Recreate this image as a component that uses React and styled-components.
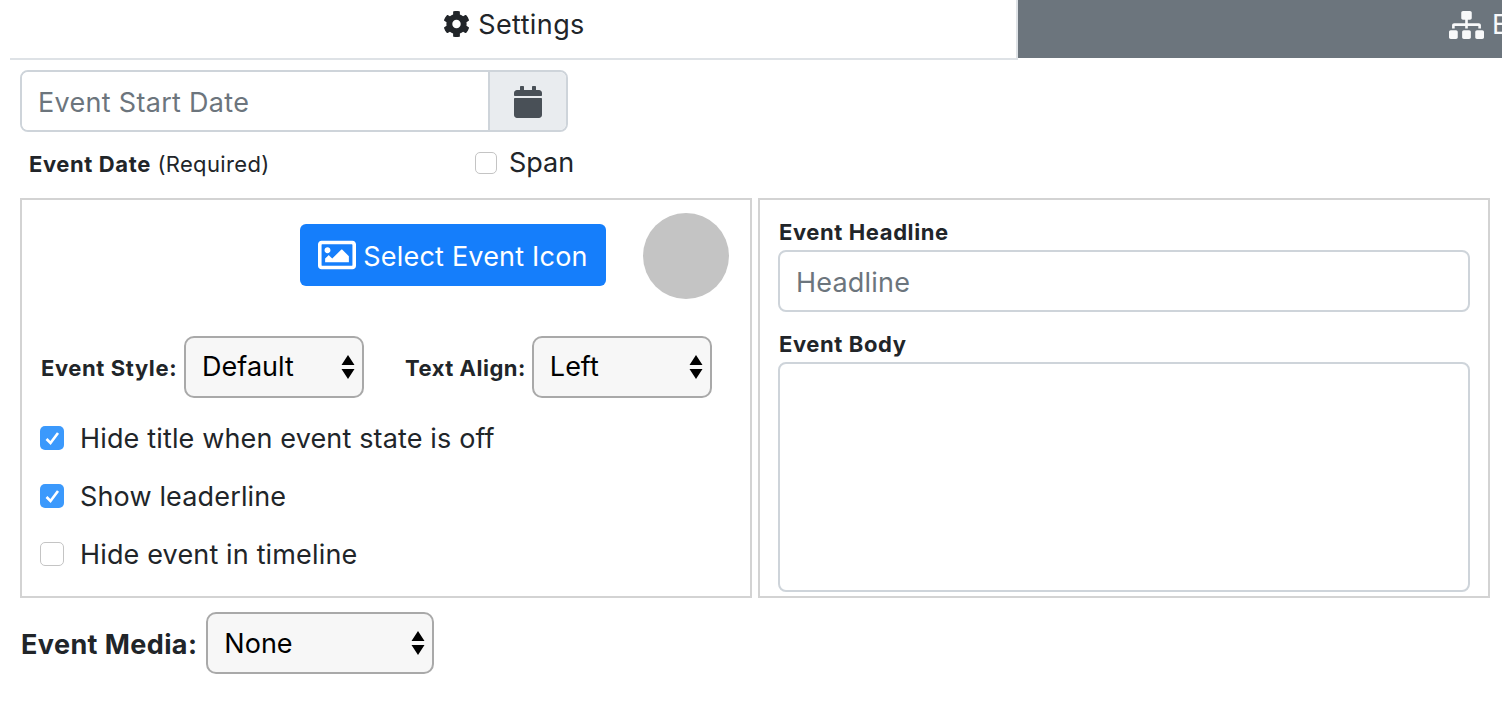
import styled, { createGlobalStyle } from "styled-components";
import { FaCog, FaSitemap, FaCalendar, FaRegImage } from "react-icons/fa";

const GlobalStyle = createGlobalStyle`
  html, body {
    margin: 0;
    background: #fff;
    overflow: hidden;
  }
  body {
    font-family: Inter, "Liberation Sans", sans-serif;
    color: #212529;
  }
  * {
    box-sizing: border-box;
  }
`;

const Page = styled.div`
  width: 1502px;
  height: 716px;
  padding-left: 10px;
  overflow: hidden;
`;

const Tabs = styled.div`
  display: flex;
  height: 60px;
`;

const Tab = styled.div`
  height: ${(p) => (p.$active ? "60px" : "58px")};
  display: flex;
  align-items: center;
  gap: 8px;
  font-size: 27px;
  letter-spacing: 0.4px;
  white-space: nowrap;
  overflow: hidden;
  svg {
    flex: none;
    height: 28px;
    width: ${(p) => (p.$active ? "27px" : "35px")};
  }
  ${(p) =>
    p.$active
      ? `
    width: 1008px;
    justify-content: center;
    padding-bottom: 10px;
    padding-left: 2px;
    color: #212529;
    border-bottom: 2px solid #dee2e6;
    border-right: 2px solid #dee2e6;
  `
      : `
    flex: 1;
    padding-left: 431px;
    padding-bottom: 9px;
    background: #6c757d;
    color: #f8f9fa;
  `}
`;

const Content = styled.div`
  padding: 10px 12px 0 10px;
`;

const InputGroup = styled.div`
  display: flex;
  width: 548px;
  height: 62px;
  border: 2px solid #ced4da;
  border-radius: 8px;
  overflow: hidden;
`;

const GroupInput = styled.input`
  flex: 1;
  min-width: 0;
  border: 0;
  outline: 0;
  padding: 2px 16px 0;
  font: 27px Inter, "Liberation Sans", sans-serif;
  letter-spacing: 0.3px;
  background: #fff;
  &::placeholder {
    color: #6c757d;
    opacity: 1;
  }
`;

const Addon = styled.div`
  width: 78px;
  display: flex;
  align-items: center;
  justify-content: center;
  padding-top: 2px;
  background: #e9ecef;
  border-left: 2px solid #ced4da;
  color: #495057;
  font-size: 32px;
`;

const DateRow = styled.div`
  display: flex;
  align-items: center;
  height: 66px;
  padding-left: 9px;
`;

const DateLabel = styled.div`
  width: 446px;
  margin-top: -2px;
  font-size: 22px;
  letter-spacing: 0.35px;
`;

const Bold = styled.strong`
  font-weight: 700;
  letter-spacing: 0.6px;
`;

const Check = styled.input.attrs({ type: "checkbox", readOnly: true })`
  appearance: none;
  width: 24px;
  height: 24px;
  margin: 0;
  flex: none;
  border: 1px solid #c4c4c4;
  border-radius: 5px;
  background: #fff;
  &:checked {
    border: 0;
    background: #3b99fc
      url("data:image/svg+xml,%3Csvg xmlns='http://www.w3.org/2000/svg' viewBox='0 0 24 24'%3E%3Cpath d='M6.5 13l4 4L18 7' fill='none' stroke='white' stroke-width='2.6'/%3E%3C/svg%3E")
      center / 24px 24px no-repeat;
  }
`;

const SpanCheck = styled(Check)`
  width: 22px;
  height: 22px;
`;

const SpanField = styled.label`
  display: flex;
  align-items: center;
  gap: 12px;
  font-size: 27px;
  line-height: 32px;
  margin-top: -4px;
`;

const Panels = styled.div`
  display: flex;
  gap: 6px;
`;

const Panel = styled.div`
  width: 732px;
  height: 400px;
  border: 2px solid #d3d3d3;
`;

const SettingsPanel = styled(Panel)`
  padding: 13px 21px 0 18px;
`;

const IconRow = styled.div`
  display: flex;
  justify-content: flex-end;
  align-items: center;
  gap: 37px;
  height: 86px;
`;

const IconButton = styled.button`
  width: 306px;
  height: 62px;
  margin-bottom: 2px;
  display: flex;
  align-items: center;
  justify-content: center;
  gap: 7px;
  border: 0;
  border-radius: 6px;
  padding: 2px 0 0;
  background: #157efb;
  color: #fff;
  font: 27px Inter, "Liberation Sans", sans-serif;
  letter-spacing: 0.2px;
  svg {
    font-size: 38px;
    margin-top: -2px;
  }
`;

const Circle = styled.div`
  width: 86px;
  height: 86px;
  border-radius: 50%;
  background: #c4c4c4;
`;

const StyleRow = styled.div`
  display: flex;
  align-items: center;
  margin-top: 37px;
  padding-left: 1px;
  height: 62px;
`;

const SmallLabel = styled.span`
  font-size: 22px;
  font-weight: 700;
  letter-spacing: 0.6px;
  white-space: nowrap;
  margin-right: 7px;
  padding-top: 2px;
`;

const AlignLabel = styled(SmallLabel)`
  margin-left: 41px;
  margin-right: 6px;
  letter-spacing: 0.5px;
`;

const SelectWrap = styled.div`
  position: relative;
  width: ${(p) => p.$width}px;
  height: 62px;
  flex: none;
`;

const Select = styled.select`
  appearance: none;
  width: 100%;
  height: 100%;
  padding: 0 0 ${(p) => p.$lift}px 16px;
  border: 2px solid #a9a9a9;
  border-radius: 10px;
  background: #f7f7f7;
  color: #000;
  font: 27px Inter, "Liberation Sans", sans-serif;
  outline: 0;
`;

const Arrows = styled.svg`
  position: absolute;
  right: 9px;
  top: 18px;
  width: 14px;
  height: 26px;
  pointer-events: none;
`;

const CheckList = styled.div`
  margin-top: 11px;
`;

const CheckRow = styled.label`
  display: flex;
  align-items: center;
  gap: 16px;
  height: 58px;
  font-size: 27px;
  letter-spacing: 0.15px;
`;

const ContentPanel = styled(Panel)`
  padding: 18px 18px 0 18px;
`;

const FieldLabel = styled.div`
  font-size: 22px;
  font-weight: 700;
  letter-spacing: 0.6px;
  line-height: 28px;
  height: 32px;
  padding-left: 1px;
`;

const TextInput = styled.input`
  display: block;
  width: 692px;
  height: 62px;
  margin-bottom: 18px;
  padding: 2px 16px 0;
  border: 2px solid #ced4da;
  border-radius: 8px;
  outline: 0;
  font: 27px Inter, "Liberation Sans", sans-serif;
  letter-spacing: 0.2px;
  &::placeholder {
    color: #6c757d;
    opacity: 1;
  }
`;

const TextArea = styled.textarea`
  display: block;
  width: 692px;
  height: 230px;
  border: 2px solid #ced4da;
  border-radius: 8px;
  outline: 0;
  resize: none;
`;

const MediaRow = styled.div`
  display: flex;
  align-items: center;
  gap: 9px;
  margin-top: 14px;
  padding-left: 1px;
`;

const MediaLabel = styled.span`
  font-size: 27px;
  font-weight: 700;
  letter-spacing: 0.4px;
  padding-top: 2px;
`;

function SelectBox({ width, value, lift = 2 }) {
  return (
    <SelectWrap $width={width}>
      <Select defaultValue={value} $lift={lift}>
        <option>{value}</option>
      </Select>
      <Arrows viewBox="0 0 14 26">
        <path d="M7 1l6.5 10H.5zM7 25L.5 15h13z" fill="#000" />
      </Arrows>
    </SelectWrap>
  );
}

export default function App() {
  return (
    <Page>
      <GlobalStyle />
      <Tabs>
        <Tab $active>
          <FaCog />
          Settings
        </Tab>
        <Tab>
          <FaSitemap />
          Event
        </Tab>
      </Tabs>
      <Content>
        <InputGroup>
          <GroupInput placeholder="Event Start Date" />
          <Addon>
            <FaCalendar />
          </Addon>
        </InputGroup>
        <DateRow>
          <DateLabel>
            <Bold>Event Date</Bold> (Required)
          </DateLabel>
          <SpanField>
            <SpanCheck />
            Span
          </SpanField>
        </DateRow>
        <Panels>
          <SettingsPanel>
            <IconRow>
              <IconButton>
                <FaRegImage />
                Select Event Icon
              </IconButton>
              <Circle />
            </IconRow>
            <StyleRow>
              <SmallLabel>Event Style:</SmallLabel>
              <SelectBox width={180} value="Default" />
              <AlignLabel>Text Align:</AlignLabel>
              <SelectBox width={180} value="Left" />
            </StyleRow>
            <CheckList>
              <CheckRow>
                <Check defaultChecked />
                Hide title when event state is off
              </CheckRow>
              <CheckRow>
                <Check defaultChecked />
                Show leaderline
              </CheckRow>
              <CheckRow>
                <Check />
                Hide event in timeline
              </CheckRow>
            </CheckList>
          </SettingsPanel>
          <ContentPanel>
            <FieldLabel>Event Headline</FieldLabel>
            <TextInput placeholder="Headline" />
            <FieldLabel>Event Body</FieldLabel>
            <TextArea />
          </ContentPanel>
        </Panels>
        <MediaRow>
          <MediaLabel>Event Media:</MediaLabel>
          <SelectBox width={228} value="None" lift={0} />
        </MediaRow>
      </Content>
    </Page>
  );
}
